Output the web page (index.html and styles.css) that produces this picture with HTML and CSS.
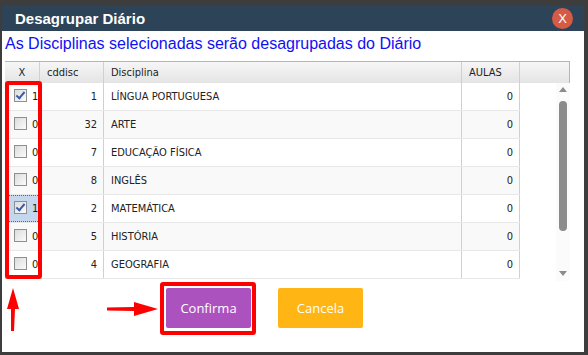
FILE: index.html
```html
<!DOCTYPE html>
<html lang="pt-BR">
<head>
    <meta charset="utf-8" />
    <title>Desagrupar Diário</title>
    <link rel="stylesheet" href="styles.css">
</head>
<body>
    <div class="dialog">
        <div class="titlebar">
            <span class="title">Desagrupar Diário</span>
            <span class="close">X</span>
        </div>
        <div class="message">As Disciplinas selecionadas serão desagrupadas do Diário</div>

        <div class="grid">
            <div class="grid-head">
                <div class="hcell center">X</div>
                <div class="hcell">cddisc</div>
                <div class="hcell">Disciplina</div>
                <div class="hcell">AULAS</div>
                <div class="hcell"></div>
            </div>
            <div class="grid-body">
                <div class="rows">
                    <div class="row">
                        <div class="cell sel"><span class="chk on"></span>1</div>
                        <div class="cell num">1</div>
                        <div class="cell">LÍNGUA PORTUGUESA</div>
                        <div class="cell num">0</div>
                    </div>
                    <div class="row alt">
                        <div class="cell sel"><span class="chk"></span>0</div>
                        <div class="cell num">32</div>
                        <div class="cell">ARTE</div>
                        <div class="cell num">0</div>
                    </div>
                    <div class="row">
                        <div class="cell sel"><span class="chk"></span>0</div>
                        <div class="cell num">7</div>
                        <div class="cell">EDUCAÇÃO FÍSICA</div>
                        <div class="cell num">0</div>
                    </div>
                    <div class="row alt">
                        <div class="cell sel"><span class="chk"></span>0</div>
                        <div class="cell num">8</div>
                        <div class="cell">INGLÊS</div>
                        <div class="cell num">0</div>
                    </div>
                    <div class="row">
                        <div class="cell sel focus"><span class="chk on"></span>1</div>
                        <div class="cell num">2</div>
                        <div class="cell">MATEMÁTICA</div>
                        <div class="cell num">0</div>
                    </div>
                    <div class="row alt">
                        <div class="cell sel"><span class="chk"></span>0</div>
                        <div class="cell num">5</div>
                        <div class="cell">HISTÓRIA</div>
                        <div class="cell num">0</div>
                    </div>
                    <div class="row">
                        <div class="cell sel"><span class="chk"></span>0</div>
                        <div class="cell num">4</div>
                        <div class="cell">GEOGRAFIA</div>
                        <div class="cell num">0</div>
                    </div>
                </div>
                <div class="gap"></div>
                <div class="scrollbar">
                    <span class="arrow up"></span>
                    <span class="thumb"></span>
                    <span class="arrow down"></span>
                </div>
            </div>
        </div>

        <div class="buttons">
            <button class="btn confirm">Confirma</button>
            <button class="btn cancel">Cancela</button>
        </div>

        <!-- annotations -->
        <div class="mark mark-col"></div>
        <div class="mark mark-btn"></div>
        <svg class="arrow-up" width="16" height="46" viewBox="0 0 16 46">
            <path d="M8 1 L14 22 L10 22 L9 44 L6 44 L6 22 L2 22 Z" fill="#f00"/>
        </svg>
        <svg class="arrow-right" width="54" height="18" viewBox="0 0 54 18">
            <path d="M1 7.5 L28 7 L28 2 L52 9 L28 16 L28 11 L1 10.5 Z" fill="#f00"/>
        </svg>
    </div>
</body>
</html>
```

FILE: styles.css
```css
html, body {
    margin: 0;
    padding: 0;
    height: 100%;
    overflow: hidden;
    background: #3d3d3d;
}
.dialog {
    position: relative;
    margin: 5px 4px 0 2px;
    height: 347px;
    background: #fff;
    font-family: "Liberation Sans", Arial, sans-serif;
}
.titlebar {
    height: 26px;
    background: #2d4357;
    display: flex;
    align-items: center;
    justify-content: space-between;
    padding: 0 11px 0 13px;
}
.title {
    color: #fff;
    font-weight: bold;
    font-size: 15px;
}
.close {
    width: 21px;
    height: 21px;
    border-radius: 50%;
    background: #d45b45;
    color: #fff;
    font-size: 13px;
    line-height: 21px;
    text-align: center;
}
.message {
    color: #1010f5;
    font-size: 16px;
    padding: 4px 0 0 3px;
    height: 26px;
}

.grid {
    margin-left: 3px;
    width: 565px;
    font-family: "DejaVu Sans Condensed", "DejaVu Sans", sans-serif;
    font-size: 11px;
    color: #222;
}
.grid-head {
    display: grid;
    grid-template-columns: 35px 64px 358px 58px 1fr;
    height: 21px;
    border-top: 1px solid #99bbe8;
    border-right: 1px solid #99bbe8;
    background: linear-gradient(to bottom, #f6f6f6, #e4e4e4);
}
.hcell {
    border-right: 1px solid #d0d0d0;
    padding-left: 7px;
    line-height: 21px;
}
.hcell:last-child {
    border-right: none;
}
.hcell.center {
    text-align: center;
    padding-left: 0;
}
.grid-body {
    display: flex;
    height: 198px;
}
.rows {
    width: 515px;
}
.row {
    display: grid;
    grid-template-columns: 35px 64px 358px 58px;
    height: 27px;
    border-bottom: 1px solid #e8e8e8;
    background: #fff;
}
.row.alt {
    background: #f9f9f9;
}
.cell {
    line-height: 27px;
    padding-left: 7px;
    border-right: 1px solid #d0d0d0;
    white-space: nowrap;
    overflow: hidden;
}
.cell.num {
    text-align: right;
    padding: 0 6px 0 0;
}
.cell.sel {
    display: flex;
    align-items: center;
    padding-left: 9px;
    gap: 5px;
    color: #1a1a1a;
}
.cell.focus {
    background: #c3d7ef;
    outline: 1px dotted #4a6a96;
    outline-offset: -1px;
}
.chk {
    width: 11px;
    height: 11px;
    border: 1px solid #8e8f8f;
    background: linear-gradient(135deg, #dcdcdc, #fbfbfb);
    flex: none;
    position: relative;
    top: -1px;
}
.chk.on::after {
    content: "";
    position: absolute;
    left: 3px;
    top: 0;
    width: 3px;
    height: 7px;
    border: solid #3c5dab;
    border-width: 0 2px 2px 0;
    transform: rotate(40deg);
}
.gap {
    width: 36px;
}
.scrollbar {
    width: 14px;
    background: #fbfbfb;
    position: relative;
}
.thumb {
    position: absolute;
    left: 3px;
    top: 18px;
    width: 8px;
    height: 130px;
    background: #8b8b8b;
    border-radius: 4px;
}
.arrow {
    position: absolute;
    left: 3px;
    width: 0;
    height: 0;
    border-left: 4px solid transparent;
    border-right: 4px solid transparent;
}
.arrow.up {
    top: 4px;
    border-bottom: 5px solid #8b8b8b;
}
.arrow.down {
    bottom: 5px;
    border-top: 5px solid #8b8b8b;
}

.buttons {
    display: flex;
    gap: 27px;
    padding: 7px 0 0 164px;
}
.btn {
    width: 85px;
    height: 40px;
    border: none;
    border-radius: 2px;
    color: #fff;
    font-family: "Open Sans", sans-serif;
    font-size: 13px;
}
.btn.confirm {
    background: #ac52bf;
}
.btn.cancel {
    background: #ffb513;
}

.mark {
    position: absolute;
    border: 4px solid #f00;
    border-radius: 3px;
}
.mark-col {
    left: 3px;
    top: 76px;
    width: 29px;
    height: 190px;
}
.mark-btn {
    left: 158px;
    top: 277px;
    width: 88px;
    height: 45px;
}
.arrow-up {
    position: absolute;
    left: 3px;
    top: 282px;
}
.arrow-right {
    position: absolute;
    left: 104px;
    top: 295px;
}
```
